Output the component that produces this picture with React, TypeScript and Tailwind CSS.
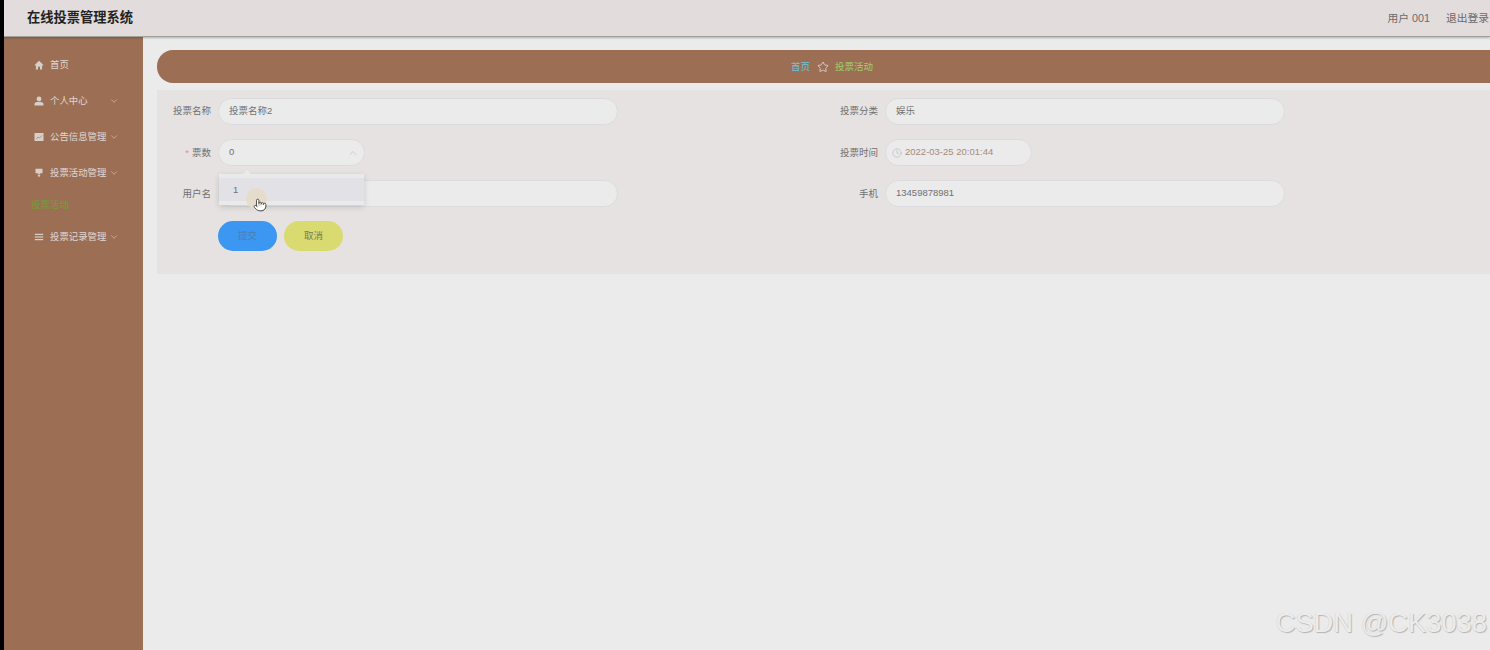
import { ChevronDown, ChevronUp, Clock, Pointer, Star } from "lucide-react";

const font = "font-['Liberation_Sans','Noto_Sans_CJK_SC',sans-serif]";

function HomeIcon() {
	return (
		<svg width="10" height="10" viewBox="0 0 10 10" fill="#d6cfca">
			<path d="M5 .8 .6 5l.5.7.8-.6v4.300h2.100V6.700h2V9.400h2.100V5.100l.8.600.5-.7z" />
		</svg>
	);
}

function UserIcon() {
	return (
		<svg width="10" height="10" viewBox="0 0 10 10" fill="#d6cfca">
			<circle cx="5" cy="2.900" r="2.400" />
			<path d="M.5 9.500V8c0-1.500 2-2.200 4.500-2.200S9.500 6.500 9.500 8v1.500z" />
		</svg>
	);
}

function ChartIcon() {
	return (
		<svg width="10" height="10" viewBox="0 0 10 10">
			<rect x=".5" y="1" width="9" height="8" fill="#d6cfca" />
			<path d="M2 7l2-2 1.500 1L8 3.500" stroke="#a98670" strokeWidth=".8" fill="none" />
		</svg>
	);
}

function TrophyIcon() {
	return (
		<svg width="10" height="10" viewBox="0 0 10 10" fill="#d6cfca">
			<path d="M1.500 .8h7v4.400H6.500L5 6.600 3.500 5.200H1.500z" />
			<path d="M3.500 6.800h3L5 9.600z" />
		</svg>
	);
}

function ListIcon() {
	return (
		<svg width="10" height="10" viewBox="0 0 10 10" fill="#d6cfca">
			<rect x=".8" y="1.800" width="8.400" height="1.200" />
			<rect x=".8" y="4.400" width="8.400" height="1.200" />
			<rect x=".8" y="7" width="8.400" height="1.200" />
		</svg>
	);
}

function MenuItem({ icon, label, arrowGap, top }: { icon: React.ReactNode; label: string; arrowGap?: string; top: string }) {
	return (
		<div className={`flex h-[20px] items-center pl-[30px] text-[9.400px] text-[#e0d8d3] ${top}`}>
			<span className="flex w-[16px] shrink-0">{icon}</span>
			<span>{label}</span>
			{arrowGap && <ChevronDown size={10} strokeWidth={1.500} className={`text-[#d8cbc2] ${arrowGap}`} />}
		</div>
	);
}

function Label({ text, required, lower }: { text: string; required?: boolean; lower?: boolean }) {
	return (
		<label className={`w-[54px] shrink-0 text-right text-[9.500px] text-[#707070] ${lower ? "pt-[2px]" : ""}`}>
			{required && <span className="mr-[3px] text-[#f08a8a]">*</span>}
			{text}
		</label>
	);
}

function Field({ label, value, lower }: { label: string; value: string; lower?: boolean }) {
	return (
		<div className="flex h-[27px] items-center">
			<Label text={label} lower={lower} />
			<div className="ml-[7px] flex h-[27px] w-[400px] items-center rounded-[14px] border border-[#dcdbe0] bg-[#ebebeb] px-[10px] text-[9.500px] text-[#707070]">
				{value}
			</div>
		</div>
	);
}

export default function App() {
	return (
		<div className={`relative flex h-[650px] w-[1490px] flex-col overflow-hidden bg-[#ebebeb] pl-[4px] ${font}`}>
			<div className="absolute inset-y-0 left-0 z-20 w-[4px] bg-black" />
			<header className="z-10 -ml-[4px] flex h-[37px] shrink-0 items-center justify-between border-b border-[#a3a09e] bg-[#e2dcdc] pl-[27px] shadow-[0_1px_2px_rgba(0,0,0,0.25)]">
				<div className="text-[13.250px] font-bold text-[#222]">在线投票管理系统</div>
				<div className="flex gap-[16px] whitespace-nowrap pr-[1px] text-[10.750px] text-[#6a6a6a]">
					<span>用户 001</span>
					<span>退出登录</span>
				</div>
			</header>
			<div className="flex min-h-0 flex-1">
				<aside className="w-[139px] shrink-0 bg-[#9c6f55] pt-[18px]">
					<MenuItem icon={<HomeIcon />} label="首页" top="" />
					<MenuItem icon={<UserIcon />} label="个人中心" arrowGap="ml-[21px]" top="mt-[16px]" />
					<MenuItem icon={<ChartIcon />} label="公告信息管理" arrowGap="ml-[3px]" top="mt-[16px]" />
					<MenuItem icon={<TrophyIcon />} label="投票活动管理" arrowGap="ml-[3px]" top="mt-[16px]" />
					<div className="mt-[12px] h-[20px] pl-[27px] text-[9.400px] leading-[20px] text-[#6fa02f]">投票活动</div>
					<MenuItem icon={<ListIcon />} label="投票记录管理" arrowGap="ml-[3px]" top="mt-[12px]" />
				</aside>
				<main className="relative min-w-0 flex-1 pl-[14px] pt-[13px]">
					<nav className="flex h-[33px] w-[1400px] items-center justify-center rounded-l-[16px] bg-[#9c6f55] pr-[50px] pt-[1px] text-[9.500px]">
						<span className="text-[#6cc4d4]">首页</span>
						<Star size={12} strokeWidth={2} className="mx-[6.500px] text-[#d2cdc9]" />
						<span className="text-[#9fd06a]">投票活动</span>
					</nav>
					<section className="mt-[7px] flex h-[184px] w-[1400px] flex-col bg-[#e6e2e1] pt-[8px]">
						<div className="grid grid-cols-[667px_1fr]">
							<Field label="投票名称" value="投票名称2" />
							<Field label="投票分类" value="娱乐" />
						</div>
						<div className="mt-[14px] grid grid-cols-[667px_1fr]">
							<div className="flex h-[27px] items-center">
								<Label text="票数" required lower />
								<div className="ml-[7px] flex h-[27px] w-[147px] items-center justify-between rounded-[14px] border border-[#dcdbe0] bg-[#ebebeb] pl-[10px] pr-[5px] text-[9.500px] text-[#707070]">
									0
									<ChevronUp size={12} strokeWidth={1.500} className="text-[#c4c4c4]" />
								</div>
							</div>
							<div className="flex h-[27px] items-center">
								<Label text="投票时间" lower />
								<div className="ml-[7px] flex h-[27px] w-[147px] items-center rounded-[14px] border border-[#dcdbe0] bg-[#ebebeb] pl-[6px] text-[9.500px] text-[#a98a76]">
									<Clock size={10} strokeWidth={1.500} className="mr-[3px] text-[#b8b4bc]" />
									2022-03-25 20:01:44
								</div>
							</div>
						</div>
						<div className="mt-[14px] grid grid-cols-[667px_1fr]">
							<Field label="用户名" value="" lower />
							<Field label="手机" value="13459878981" lower />
						</div>
						<div className="ml-[61px] mt-[14px] flex gap-[7px]">
							<button className="h-[30px] w-[59px] rounded-[15px] bg-[#3c97f2] pt-[1px] text-[9.500px] text-[#4d7fae]">提交</button>
							<button className="h-[30px] w-[59px] rounded-[15px] bg-[#d9db70] pt-[1px] text-[9.500px] text-[#7b7a55]">取消</button>
						</div>
					</section>
					<div className="absolute left-[76px] top-[137px] z-10 w-[145px] bg-[#ebeaea] py-[4px] shadow-[0_2px_6px_rgba(0,0,0,0.15)]">
						<div className="absolute -top-[4px] left-[24px] h-0 w-0 border-x-[4px] border-b-[4px] border-x-transparent border-b-[#ebeaea]" />
						<div className="flex h-[23px] items-center bg-[#e2e2e6] pl-[14px] pt-[2px] text-[9.500px] text-[#707070]">1</div>
					</div>
					<div className="absolute left-[103px] top-[151px] z-10 h-[21px] w-[21px] rounded-full bg-[#e6dccb]" />
					<Pointer size={14} strokeWidth={1.400} className="absolute left-[110px] top-[161px] z-20 fill-white text-[#333]" />
				</main>
			</div>
			<div className="absolute bottom-[6px] right-[3px] z-10 text-[27.300px] text-[#ececec] [text-shadow:1px_1px_1px_#b4b4b4,-0.5px_-0.5px_0_#d8d8d8]">CSDN @CK3038</div>
		</div>
	);
}
